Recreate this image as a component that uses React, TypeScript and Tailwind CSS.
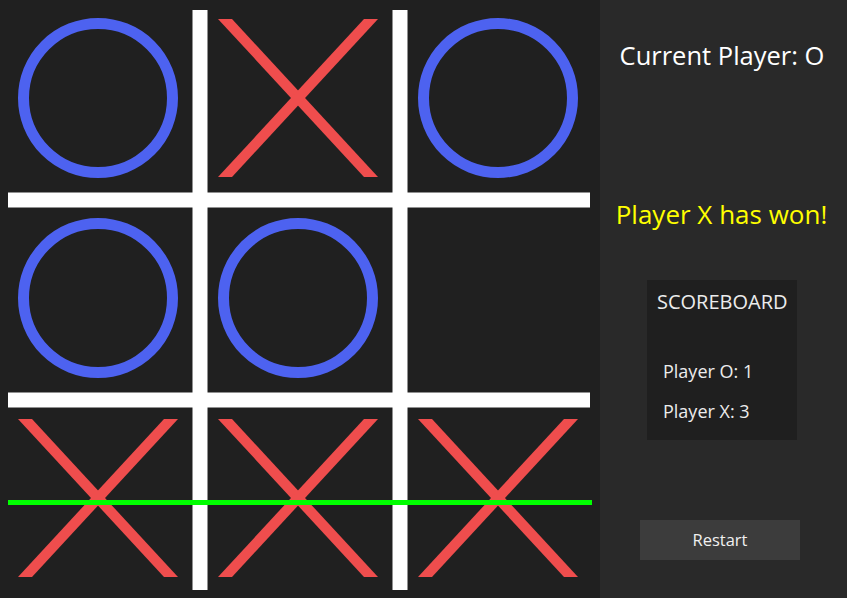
import React from 'react';

type Mark = 'X' | 'O' | null;

const board: Mark[] = ['O', 'X', 'O', 'O', 'O', null, 'X', 'X', 'X'];

const BLUE = '#4d62f0';
const RED = '#ef4d4d';

const XMark: React.FC<{ c: number; r: number }> = ({ c, r }) => (
  <g fill={RED}>
    <polygon points={`${c + 18},${r + 19} ${c + 32},${r + 19} ${c + 178},${r + 177} ${c + 164},${r + 177}`} />
    <polygon points={`${c + 164},${r + 19} ${c + 178},${r + 19} ${c + 32},${r + 177} ${c + 18},${r + 177}`} />
  </g>
);

const OMark: React.FC<{ c: number; r: number }> = ({ c, r }) => (
  <circle cx={c + 98} cy={r + 98} r={74.5} fill="none" stroke={BLUE} strokeWidth={11} />
);

const Board: React.FC = () => (
  <svg width="600" height="598" viewBox="0 0 600 598" className="block shrink-0">
    <rect width="600" height="598" fill="#202020" />
    {board.map((m, i) => {
      const c = (i % 3) * 200;
      const r = Math.floor(i / 3) * 200;
      if (m === 'X') return <XMark key={i} c={c} r={r} />;
      if (m === 'O') return <OMark key={i} c={c} r={r} />;
      return null;
    })}
    {/* grid */}
    <rect x="192.5" y="10" width="15" height="580" fill="#fff" />
    <rect x="392.5" y="10" width="15" height="580" fill="#fff" />
    <rect x="8" y="192.5" width="582" height="15" fill="#fff" />
    <rect x="8" y="392.5" width="582" height="15" fill="#fff" />
    {/* winning row */}
    <rect x="8" y="500" width="584" height="5" fill="#00ff00" />
  </svg>
);

export default function App() {
  return (
    <div className="flex w-[847px] h-[598px] overflow-hidden font-['Open_Sans',sans-serif]">
      <Board />
      <div className="flex-1 bg-[#292929] flex flex-col items-start">
        <div className="mt-[39px] w-[244px] text-center text-[25.5px] leading-[32px] text-white">Current Player: O</div>
        <div className="mt-[127px] w-[243px] text-center text-[26px] leading-[32px] text-[#ffff00]">Player X has won!</div>
        <div className="mt-[50px] ml-[47px] w-[150px] h-[160px] bg-[#1f1f1f] text-[#ececec] flex flex-col">
          <div className="mt-[8px] pl-[10px] text-[20px] leading-[28px]">SCOREBOARD</div>
          <div className="mt-[43px] pl-[16px] text-[18px] leading-[24px]">Player O: 1</div>
          <div className="mt-[16px] pl-[16px] text-[18px] leading-[24px]">Player X: 3</div>
        </div>
        <button className="mt-[80px] ml-[40px] w-[160px] h-[40px] bg-[#3c3c3c] text-[#f0f0f0] text-[16.5px] leading-[20px]">
          Restart
        </button>
      </div>
    </div>
  );
}
